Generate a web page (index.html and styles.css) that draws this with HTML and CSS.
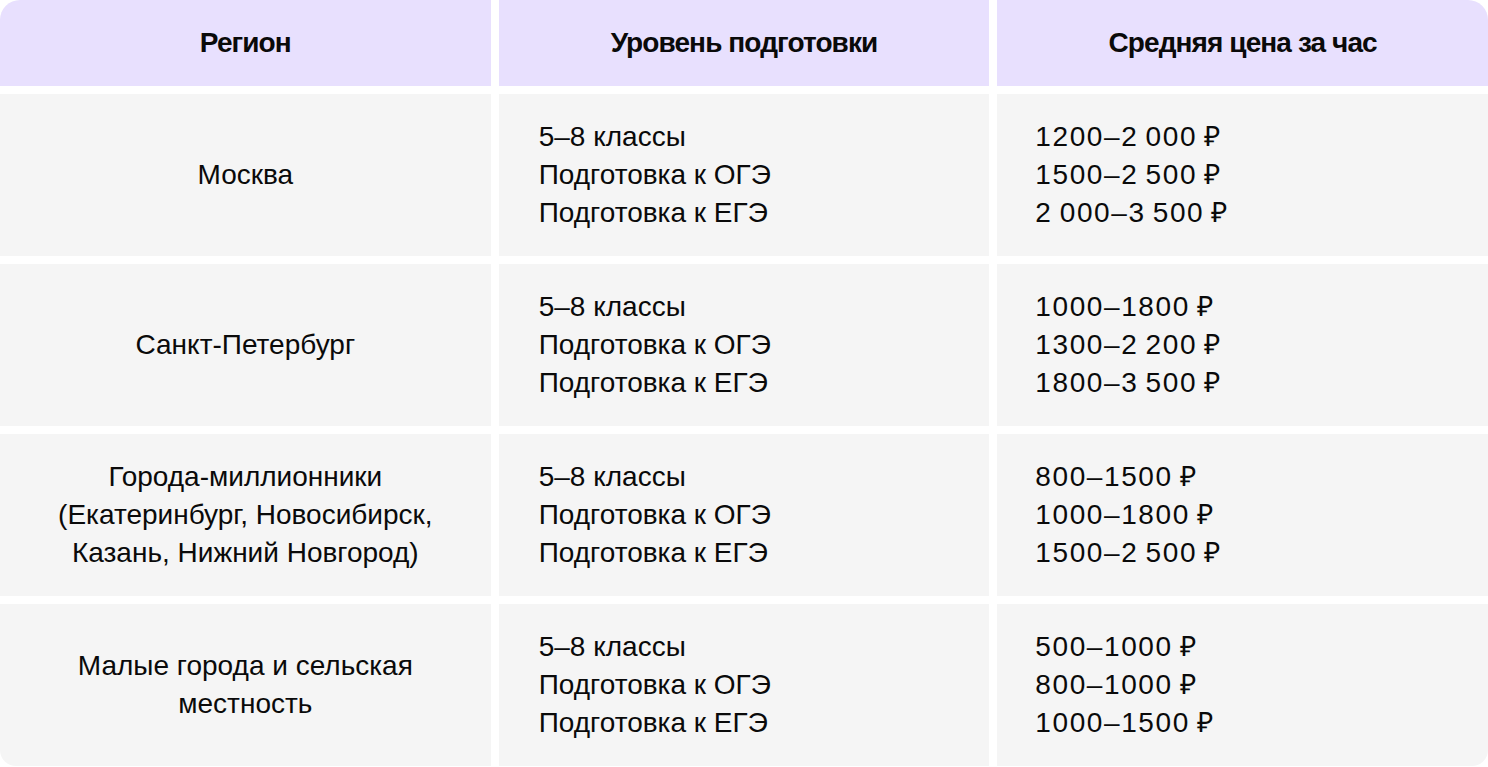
FILE: index.html
```html
<!DOCTYPE html>
<html lang="ru">
<head>
<meta charset="utf-8">
<title>Цены репетиторов</title>
<link rel="stylesheet" href="styles.css">
</head>
<body>
<div class="table">
  <div class="cell head head-first">Регион</div>
  <div class="cell head">Уровень подготовки</div>
  <div class="cell head head-last">Средняя цена за час</div>

  <div class="cell region">Москва</div>
  <div class="cell list"><span>5–8 классы</span><span>Подготовка к ОГЭ</span><span>Подготовка к ЕГЭ</span></div>
  <div class="cell list price"><span>1200–2&#8201;000&#8201;₽</span><span>1500–2&#8201;500&#8201;₽</span><span>2&#8201;000–3&#8201;500&#8201;₽</span></div>

  <div class="cell region">Санкт-Петербург</div>
  <div class="cell list"><span>5–8 классы</span><span>Подготовка к ОГЭ</span><span>Подготовка к ЕГЭ</span></div>
  <div class="cell list price"><span>1000–1800&#8201;₽</span><span>1300–2&#8201;200&#8201;₽</span><span>1800–3&#8201;500&#8201;₽</span></div>

  <div class="cell region">Города-миллионники<br>(Екатеринбург, Новосибирск,<br>Казань, Нижний Новгород)</div>
  <div class="cell list"><span>5–8 классы</span><span>Подготовка к ОГЭ</span><span>Подготовка к ЕГЭ</span></div>
  <div class="cell list price"><span>800–1500&#8201;₽</span><span>1000–1800&#8201;₽</span><span>1500–2&#8201;500&#8201;₽</span></div>

  <div class="cell region region-last">Малые города и сельская<br>местность</div>
  <div class="cell list"><span>5–8 классы</span><span>Подготовка к ОГЭ</span><span>Подготовка к ЕГЭ</span></div>
  <div class="cell list price price-last"><span>500–1000&#8201;₽</span><span>800–1000&#8201;₽</span><span>1000–1500&#8201;₽</span></div>
</div>
</body>
</html>
```

FILE: styles.css
```css
html, body {
  margin: 0;
  padding: 0;
  background: #ffffff;
}

body {
  font-family: "Liberation Sans", Arial, sans-serif;
  color: #0a0a0a;
}

.table {
  display: grid;
  grid-template-columns: repeat(3, 1fr);
  grid-template-rows: 86px repeat(4, 162px);
  gap: 8px;
  width: 1488px;
}

.cell {
  background: #f5f5f5;
  font-size: 28px;
  line-height: 38px;
  letter-spacing: 0;
}

.head {
  background: #e8e0fe;
  display: flex;
  align-items: center;
  justify-content: center;
  font-weight: 700;
  letter-spacing: -0.9px;
}

.head-first { border-top-left-radius: 20px; }
.head-last { border-top-right-radius: 20px; }

.region {
  display: flex;
  align-items: center;
  justify-content: center;
  text-align: center;
}

.region-last { border-bottom-left-radius: 16px; }

.list {
  display: flex;
  flex-direction: column;
  justify-content: center;
  padding-left: 40px;
}

.price {
  padding-left: 38px;
  letter-spacing: 1.6px;
}

.price-last { border-bottom-right-radius: 16px; }
```
